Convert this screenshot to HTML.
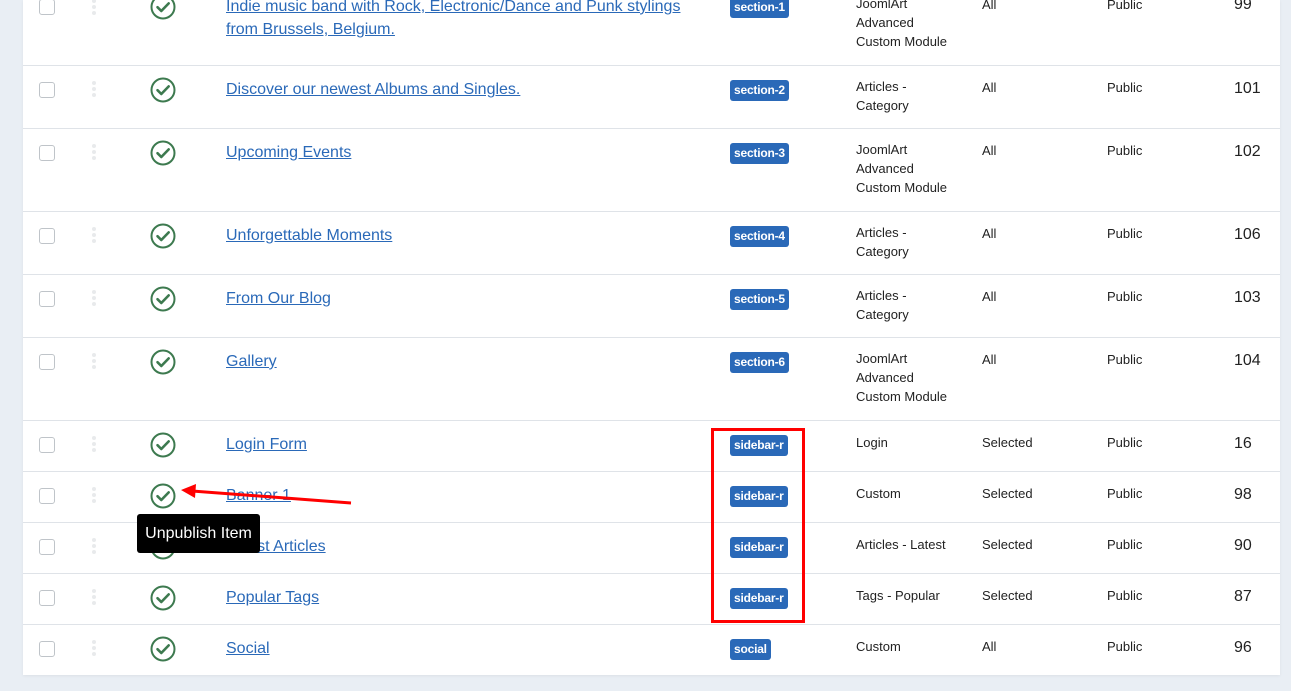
<!DOCTYPE html>
<html><head><meta charset="utf-8"><style>
*{margin:0;padding:0;box-sizing:border-box}
body{width:1291px;height:691px;overflow:hidden;background:#e9eef4;font-family:"Liberation Sans",Arial,sans-serif;position:relative}
.panel{position:absolute;left:23px;top:0;width:1257px;height:675px;background:#fff;box-shadow:0 1px 3px rgba(0,0,0,.06)}
.row{position:absolute;left:23px;width:1257px;border-bottom:1px solid #dfe3e8}
.cb{position:absolute;left:16px;width:16px;height:16px;border:1px solid #bfc4c9;border-radius:3px;background:#fff}
.dots{position:absolute;left:69px;width:4px}
.dots i{display:block;width:4px;height:4px;border-radius:50%;background:#e8eaec;margin-bottom:2px}
.chk{position:absolute;left:127px;width:26px;height:26px}
.t{position:absolute;left:203px;font-size:16px;color:#2a69b8;text-decoration:underline;line-height:23px;width:480px}
.b{position:absolute;left:707px;height:21px;line-height:21px;padding:0 4px;background:#2a69b8;color:#fff;font-size:12px;font-weight:bold;border-radius:3px;letter-spacing:-.2px}
.ty{position:absolute;left:833px;font-size:13px;color:#222;line-height:19px;width:92px}
.ty.n{white-space:nowrap;width:auto}
.pg{position:absolute;left:959px;font-size:13px;color:#222}
.ac{position:absolute;left:1084px;font-size:13px;color:#222}
.id{position:absolute;left:1211px;font-size:16px;color:#222}
</style></head><body>
<div class="panel"></div>
<svg width="0" height="0" style="position:absolute"><defs><symbol id="c" viewBox="0 0 26 26"><circle cx="13" cy="13" r="11.5" fill="none" stroke="#3d7a4f" stroke-width="2"/><path d="M7.5 13.2l3.8 3.8 7.4-7.6" fill="none" stroke="#3d7a4f" stroke-width="2.6" stroke-linecap="round" stroke-linejoin="round"/></symbol></defs></svg>

<div class="row" style="top:-18px;height:84px">
<div class="cb" style="top:17px"></div><div class="dots" style="top:17px"><i></i><i></i><i></i></div>
<svg class="chk" style="top:12px"><use href="#c"/></svg>
<div class="t" style="top:13px">Indie music band with Rock, Electronic/Dance and Punk stylings from Brussels, Belgium.</div>
<div class="b" style="top:15px">section-1</div>
<div class="ty" style="top:12px">JoomlArt Advanced Custom Module</div>
<div class="pg" style="top:15px">All</div><div class="ac" style="top:15px">Public</div><div class="id" style="top:14px">99</div>
</div>

<div class="row" style="top:66px;height:63px">
<div class="cb" style="top:16px"></div><div class="dots" style="top:15px"><i></i><i></i><i></i></div>
<svg class="chk" style="top:11px"><use href="#c"/></svg>
<div class="t" style="top:12px">Discover our newest Albums and Singles.</div>
<div class="b" style="top:14px">section-2</div>
<div class="ty" style="top:11px">Articles - Category</div>
<div class="pg" style="top:14px">All</div><div class="ac" style="top:14px">Public</div><div class="id" style="top:14px">101</div>
</div>

<div class="row" style="top:129px;height:83px">
<div class="cb" style="top:16px"></div><div class="dots" style="top:15px"><i></i><i></i><i></i></div>
<svg class="chk" style="top:11px"><use href="#c"/></svg>
<div class="t" style="top:12px">Upcoming Events</div>
<div class="b" style="top:14px">section-3</div>
<div class="ty" style="top:11px">JoomlArt Advanced Custom Module</div>
<div class="pg" style="top:14px">All</div><div class="ac" style="top:14px">Public</div><div class="id" style="top:14px">102</div>
</div>

<div class="row" style="top:212px;height:63px">
<div class="cb" style="top:16px"></div><div class="dots" style="top:15px"><i></i><i></i><i></i></div>
<svg class="chk" style="top:11px"><use href="#c"/></svg>
<div class="t" style="top:12px">Unforgettable Moments</div>
<div class="b" style="top:14px">section-4</div>
<div class="ty" style="top:11px">Articles - Category</div>
<div class="pg" style="top:14px">All</div><div class="ac" style="top:14px">Public</div><div class="id" style="top:14px">106</div>
</div>

<div class="row" style="top:275px;height:63px">
<div class="cb" style="top:16px"></div><div class="dots" style="top:15px"><i></i><i></i><i></i></div>
<svg class="chk" style="top:11px"><use href="#c"/></svg>
<div class="t" style="top:12px">From Our Blog</div>
<div class="b" style="top:14px">section-5</div>
<div class="ty" style="top:11px">Articles - Category</div>
<div class="pg" style="top:14px">All</div><div class="ac" style="top:14px">Public</div><div class="id" style="top:14px">103</div>
</div>

<div class="row" style="top:338px;height:83px">
<div class="cb" style="top:16px"></div><div class="dots" style="top:15px"><i></i><i></i><i></i></div>
<svg class="chk" style="top:11px"><use href="#c"/></svg>
<div class="t" style="top:12px">Gallery</div>
<div class="b" style="top:14px">section-6</div>
<div class="ty" style="top:11px">JoomlArt Advanced Custom Module</div>
<div class="pg" style="top:14px">All</div><div class="ac" style="top:14px">Public</div><div class="id" style="top:14px">104</div>
</div>

<div class="row" style="top:421px;height:51px">
<div class="cb" style="top:16px"></div><div class="dots" style="top:15px"><i></i><i></i><i></i></div>
<svg class="chk" style="top:11px"><use href="#c"/></svg>
<div class="t" style="top:12px">Login Form</div>
<div class="b" style="top:14px">sidebar-r</div>
<div class="ty n" style="top:12px">Login</div>
<div class="pg" style="top:14px">Selected</div><div class="ac" style="top:14px">Public</div><div class="id" style="top:14px">16</div>
</div>

<div class="row" style="top:472px;height:51px">
<div class="cb" style="top:16px"></div><div class="dots" style="top:15px"><i></i><i></i><i></i></div>
<svg class="chk" style="top:11px"><use href="#c"/></svg>
<div class="t" style="top:12px">Banner 1</div>
<div class="b" style="top:14px">sidebar-r</div>
<div class="ty n" style="top:12px">Custom</div>
<div class="pg" style="top:14px">Selected</div><div class="ac" style="top:14px">Public</div><div class="id" style="top:14px">98</div>
</div>

<div class="row" style="top:523px;height:51px">
<div class="cb" style="top:16px"></div><div class="dots" style="top:15px"><i></i><i></i><i></i></div>
<svg class="chk" style="top:11px"><use href="#c"/></svg>
<div class="t" style="top:12px">Latest Articles</div>
<div class="b" style="top:14px">sidebar-r</div>
<div class="ty n" style="top:12px">Articles - Latest</div>
<div class="pg" style="top:14px">Selected</div><div class="ac" style="top:14px">Public</div><div class="id" style="top:14px">90</div>
</div>

<div class="row" style="top:574px;height:51px">
<div class="cb" style="top:16px"></div><div class="dots" style="top:15px"><i></i><i></i><i></i></div>
<svg class="chk" style="top:11px"><use href="#c"/></svg>
<div class="t" style="top:12px">Popular Tags</div>
<div class="b" style="top:14px">sidebar-r</div>
<div class="ty n" style="top:12px">Tags - Popular</div>
<div class="pg" style="top:14px">Selected</div><div class="ac" style="top:14px">Public</div><div class="id" style="top:14px">87</div>
</div>

<div class="row" style="top:625px;height:50px;border-bottom:none">
<div class="cb" style="top:16px"></div><div class="dots" style="top:15px"><i></i><i></i><i></i></div>
<svg class="chk" style="top:11px"><use href="#c"/></svg>
<div class="t" style="top:12px">Social</div>
<div class="b" style="top:14px">social</div>
<div class="ty n" style="top:12px">Custom</div>
<div class="pg" style="top:14px">All</div><div class="ac" style="top:14px">Public</div><div class="id" style="top:14px">96</div>
</div>

<div style="position:absolute;left:711px;top:428px;width:94px;height:195px;border:3px solid #f00"></div>
<svg style="position:absolute;left:0;top:0" width="1291" height="691"><line x1="351" y1="503" x2="192" y2="491" stroke="#f00" stroke-width="3"/><path d="M181 490 L196 484 L195 498 Z" fill="#f00"/></svg>
<div style="position:absolute;left:137px;top:514px;width:123px;height:39px;background:#000;border-radius:3px;color:#fff;font-size:16px;line-height:39px;text-align:center">Unpublish Item</div>
</body></html>
